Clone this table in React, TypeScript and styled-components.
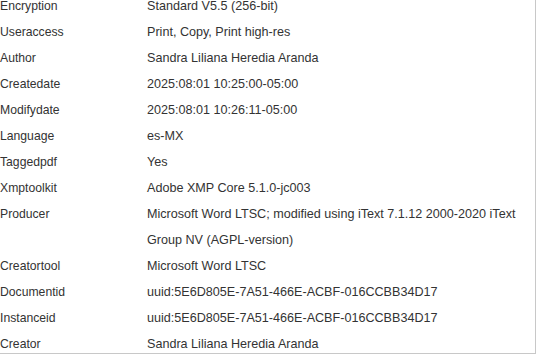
import React from 'react'
import styled, { createGlobalStyle } from 'styled-components'

const GlobalStyle = createGlobalStyle`
    html, body {
        margin: 0;
        padding: 0;
        background: #ffffff;
    }
`;

const Frame = styled.div`
    width: 535px;
    height: 353px;
    border-right: 1px solid #c8c8c8;
    border-bottom: 1px solid #c8c8c8;
    overflow: hidden;
    background: #ffffff;
`;

const Table = styled.div`
    margin-top: -7px;
    display: grid;
    grid-template-columns: 147px 382px;
    font-family: "Liberation Sans", Arial, sans-serif;
    line-height: 26px;
    color: #333333;
`;

const Label = styled.div`
    font-size: 12.2px;
`;

const Value = styled.div`
    font-size: 12.6px;
    word-wrap: break-word;
`;

const rows: [string, string][] = [
    ['Encryption', 'Standard V5.5 (256-bit)'],
    ['Useraccess', 'Print, Copy, Print high-res'],
    ['Author', 'Sandra Liliana Heredia Aranda'],
    ['Createdate', '2025:08:01 10:25:00-05:00'],
    ['Modifydate', '2025:08:01 10:26:11-05:00'],
    ['Language', 'es-MX'],
    ['Taggedpdf', 'Yes'],
    ['Xmptoolkit', 'Adobe XMP Core 5.1.0-jc003'],
    ['Producer', 'Microsoft Word LTSC; modified using iText 7.1.12 2000-2020 iText Group NV (AGPL-version)'],
    ['Creatortool', 'Microsoft Word LTSC'],
    ['Documentid', 'uuid:5E6D805E-7A51-466E-ACBF-016CCBB34D17'],
    ['Instanceid', 'uuid:5E6D805E-7A51-466E-ACBF-016CCBB34D17'],
    ['Creator', 'Sandra Liliana Heredia Aranda'],
];

export default function App() {
    return (
        <>
            <GlobalStyle />
            <Frame>
                <Table>
                    {rows.map(([k, v]) => (
                        <React.Fragment key={k}>
                            <Label>{k}</Label>
                            <Value>{v}</Value>
                        </React.Fragment>
                    ))}
                </Table>
            </Frame>
        </>
    );
}
